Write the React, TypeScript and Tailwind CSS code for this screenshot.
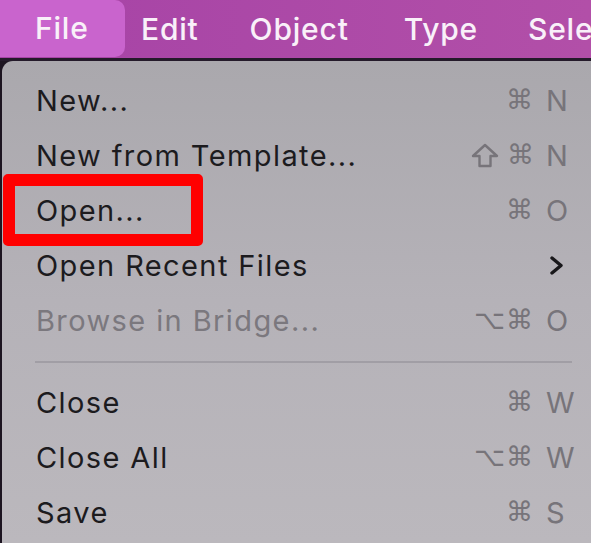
import React from 'react';

type Item = { label: string; mods?: string; keyChar?: string; disabled?: boolean; submenu?: boolean; boxed?: boolean };

const groupA: Item[] = [
  { label: 'New...', mods: '⌘', keyChar: 'N' },
  { label: 'New from Template...', mods: 'shift', keyChar: 'N' },
  { label: 'Open...', mods: '⌘', keyChar: 'O', boxed: true },
  { label: 'Open Recent Files', submenu: true },
  { label: 'Browse in Bridge...', mods: '⌥⌘', keyChar: 'O', disabled: true },
];

const groupB: Item[] = [
  { label: 'Close', mods: '⌘', keyChar: 'W' },
  { label: 'Close All', mods: '⌥⌘', keyChar: 'W' },
  { label: 'Save', mods: '⌘', keyChar: 'S' },
];

function Chevron() {
  return (
    <svg width="16" height="19" viewBox="0 0 16 19" className="mr-[3px]">
      <polyline points="3,2 12,9.5 3,17" fill="none" stroke="#18171a" strokeWidth="3.4" strokeLinecap="round" strokeLinejoin="round" />
    </svg>
  );
}

function ShiftIcon() {
  return (
    <svg width="28" height="25" viewBox="0 0 28 25" className="mr-[8px]">
      <path d="M14 2 L26 13 L19.5 13 L19.5 23 L8.5 23 L8.5 13 L2 13 Z" fill="none" stroke="#77747a" strokeWidth="2.4" strokeLinejoin="round" />
    </svg>
  );
}

function Row({ item }: { item: Item }) {
  return (
    <div className="relative flex h-[55px] items-center pl-[34px] pr-[23px]">
      {item.boxed && (
        <div className="absolute left-[1px] top-[-9px] h-[72px] w-[200px] rounded-[5px] border-[12px] border-[#ff0000]" />
      )}
      <span className={`tracking-[1.4px] ${item.disabled ? 'text-[#7b787e]' : 'text-[#1c1b1e]'}`}>{item.label}</span>
      <div className="ml-auto flex items-center">
        {item.submenu ? (
          <Chevron />
        ) : (
          <>
            {item.mods === 'shift' ? (
              <>
                <ShiftIcon />
                <span className="text-[27px] text-[#77747a] [font-family:'DejaVu_Sans',sans-serif]">⌘</span>
              </>
            ) : (
              <span className="text-[27px] tracking-[1px] text-[#77747a] [font-family:'DejaVu_Sans',sans-serif]">{item.mods}</span>
            )}
            <span className="ml-[12px] w-[22px] text-[#77747a]">{item.keyChar}</span>
          </>
        )}
      </div>
    </div>
  );
}

export default function App() {
  return (
    <div className="h-[543px] w-[591px] overflow-hidden bg-[#1c1420] [font-family:Inter,'DejaVu_Sans',sans-serif]">
      <div className="flex h-[58px] items-center overflow-hidden whitespace-nowrap bg-gradient-to-r from-[#a643a6] to-[#b24fa8] text-[30px] font-medium tracking-[0.8px] text-[#f9f0f9]">
        <div className="flex h-[57px] w-[125px] shrink-0 items-center self-start rounded-br-[10px] rounded-tr-[10px] bg-[#c964cd] pl-[35px]">File</div>
        <span className="ml-[16px]">Edit</span>
        <span className="ml-[51px]">Object</span>
        <span className="ml-[55px]">Type</span>
        <span className="ml-[50px]">Select</span>
      </div>
      <div className="h-[3px] bg-[#241a2a]" />
      <div className="ml-[2px] h-[482px] rounded-tl-[11px] bg-gradient-to-b from-[#aaa8ad] via-[#b5b2b8] to-[#bbb8bd] pt-[12px] text-[29px]">
        {groupA.map((it) => (
          <Row key={it.label} item={it} />
        ))}
        <div className="flex h-[27px] items-center pl-[33px] pr-[19px]">
          <div className="h-[2px] w-full bg-[#a19ea5]" />
        </div>
        {groupB.map((it) => (
          <Row key={it.label} item={it} />
        ))}
      </div>
    </div>
  );
}
